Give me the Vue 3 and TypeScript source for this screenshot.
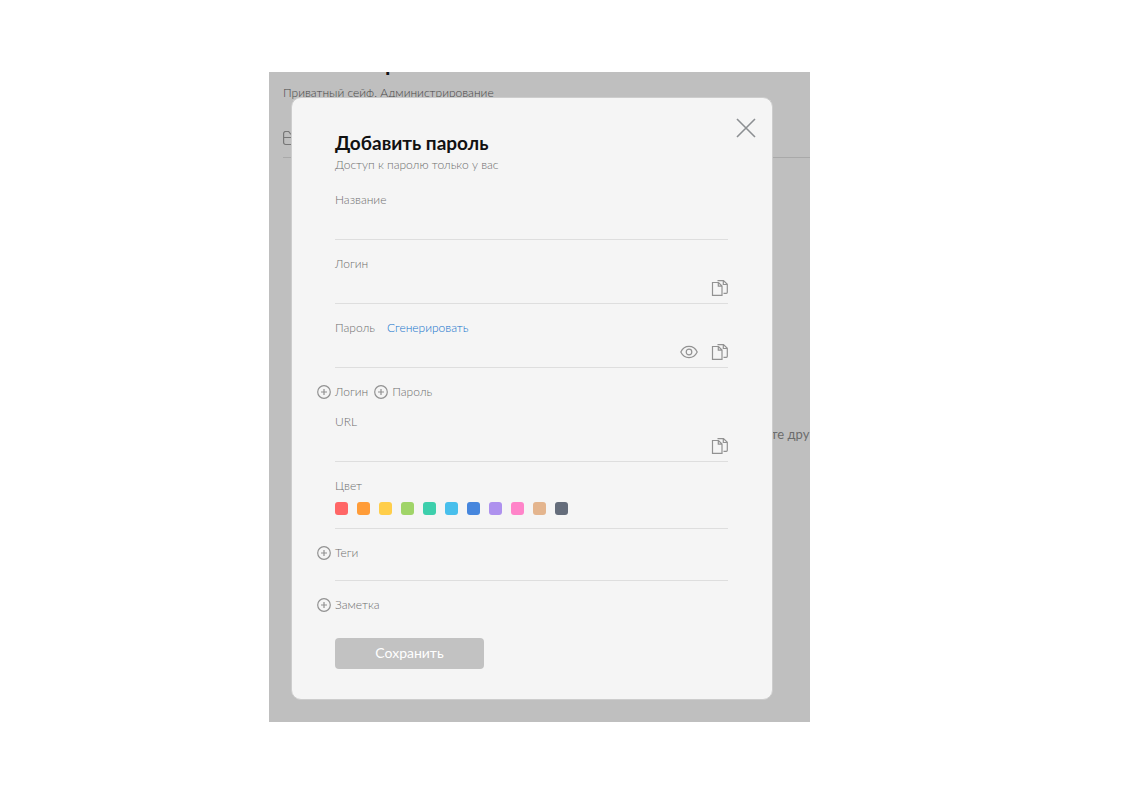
<script setup lang="ts">
import { reactive, ref } from 'vue'

interface Field {
  id: 'title' | 'login' | 'password' | 'url'
  label: string
  type: string
  copy: boolean
}

const credentials: Field[] = [
  { id: 'title', label: 'Название', type: 'text', copy: false },
  { id: 'login', label: 'Логин', type: 'text', copy: true },
  { id: 'password', label: 'Пароль', type: 'password', copy: true },
  { id: 'url', label: 'URL', type: 'url', copy: true },
]

const colors: string[] = [
  '#ff6666', '#ff9c38', '#ffce4a', '#a0d468', '#3dcfac', '#48bfec',
  '#4686dd', '#ae91ee', '#ff84c9', '#e4b58e', '#656d7b',
]

const values = reactive({ title: '', login: '', password: '', url: '' })
const color = ref('')
const visible = ref(false)

function generate(): void {
  values.password = Math.random().toString(36).slice(2, 14)
}

function copy(id: Field['id']): void {
  navigator.clipboard?.writeText(values[id])
}
</script>

<template>
  <div class="page">
    <main class="stage">
      <div class="behind">
        <div class="heading">р</div>
        <div class="access">Приватный сейф. Администрирование</div>
        <div class="toolbar">
          <svg class="folder" width="18" height="16" viewBox="0 0 18 16">
            <path d="M.6 11.500v-9a2 2 0 0 1 2-2h3l2 2.500h7a2 2 0 0 1 2 2v6.500a2 2 0 0 1-2 2h-12a2 2 0 0 1-2-2zM.6 6.500h16" />
          </svg>
        </div>
        <div class="hint">те дру</div>
      </div>

      <form class="modal" @submit.prevent>
        <button class="close" type="button" aria-label="Закрыть">
          <svg width="20" height="20" viewBox="0 0 20 20"><path d="M1 1l18 18M19 1L1 19" /></svg>
        </button>
        <h1>Добавить пароль</h1>
        <p class="sub">Доступ к паролю только у вас</p>

        <template v-for="f in credentials" :key="f.id">
          <div v-if="f.id === 'url'" class="extras">
            <button v-for="name in ['Логин', 'Пароль']" :key="name" class="add" type="button">
              <svg width="14" height="14" viewBox="0 0 14 14"><circle cx="7" cy="7" r="6.300" /><path d="M7 4v6M4 7h6" /></svg>
              <span>{{ name }}</span>
            </button>
          </div>
          <div class="field">
            <div class="caption">
              <label :for="f.id">{{ f.label }}</label>
              <button v-if="f.id === 'password'" class="generate" type="button" @click="generate">Сгенерировать</button>
            </div>
            <div class="entry">
              <input :id="f.id" v-model="values[f.id]" :type="f.id === 'password' && visible ? 'text' : f.type" autocomplete="off">
              <button v-if="f.id === 'password'" class="icon" type="button" aria-label="Показать пароль" @click="visible = !visible">
                <svg width="18" height="14" viewBox="0 0 18 14">
                  <path d="M.8 7C2.500 3.500 5.400 1.400 9 1.400S15.500 3.500 17.200 7C15.500 10.500 12.600 12.600 9 12.600S2.500 10.500.8 7z" /><circle cx="9" cy="7" r="2.800" />
                </svg>
              </button>
              <button v-if="f.copy" class="icon" type="button" aria-label="Скопировать" @click="copy(f.id)">
                <svg width="17" height="16" viewBox="0 0 17 16">
                  <path d="M1.500 2.500H7.500L11 6V15.400H1.500zM7.300 2.700V6.200H10.800M6.500 .6H12.500L16.300 4.300V12.300a1 1 0 0 1-1 1H12.500M12.300 .8V4.500H16.100" />
                </svg>
              </button>
            </div>
          </div>
        </template>

        <fieldset class="colors">
          <legend>Цвет</legend>
          <div class="swatches">
            <input v-for="c in colors" :key="c" v-model="color" type="radio" name="color" :value="c" :aria-label="c" :style="{ backgroundColor: c }">
          </div>
        </fieldset>

        <div class="tags">
          <button class="add" type="button">
            <svg width="14" height="14" viewBox="0 0 14 14"><circle cx="7" cy="7" r="6.300" /><path d="M7 4v6M4 7h6" /></svg>
            <span>Теги</span>
          </button>
        </div>
        <div class="note">
          <button class="add" type="button">
            <svg width="14" height="14" viewBox="0 0 14 14"><circle cx="7" cy="7" r="6.300" /><path d="M7 4v6M4 7h6" /></svg>
            <span>Заметка</span>
          </button>
        </div>
        <button class="save" type="submit">Сохранить</button>
      </form>
    </main>
  </div>
</template>

<style>
body {
  background: #fff;
}
</style>

<style scoped>
* {
  box-sizing: border-box;
}

.page {
  padding: 72px 312px 71px 269px;
  font: 300 12px/16px Lato, "Noto Sans", sans-serif;
  color: #6e6e6e;
}

.stage {
  position: relative;
  overflow: hidden;
  padding: 25px 37px 22px 22px;
  background: #bfbfbf;
}

.behind {
  position: absolute;
  inset: 0;
  padding-left: 14px;
  color: #484848;
}

.heading {
  height: 32px;
  margin-top: -19px;
  padding-left: 102px;
  color: #111;
  font-size: 22px;
  font-weight: 700;
  line-height: 20px;
}

.access {
  white-space: nowrap;
}

.toolbar {
  height: 57px;
  padding-top: 30px;
  border-bottom: 1px solid #a9a9a9;
}

.hint {
  padding: 267px 0 0 488px;
  color: #6c6c6c;
  font-size: 13px;
  font-weight: 400;
  line-height: 18px;
  white-space: nowrap;
}

svg {
  display: block;
  flex: none;
  fill: none;
  stroke: #929292;
  stroke-width: 1.2;
}

.folder {
  stroke: #777;
}

.modal {
  position: relative;
  padding: 33px 44px 30px 43px;
  border: 1px solid #cdcdcd;
  border-radius: 10px;
  background: #f5f5f5;
}

button {
  margin: 0;
  padding: 0;
  border: 0;
  background: none;
  color: inherit;
  font: inherit;
  cursor: pointer;
}

.close {
  position: absolute;
  top: 20px;
  right: 16px;
}

.close svg {
  stroke: #8c8f92;
  stroke-width: 1.6;
}

h1 {
  margin: 0 0 2px;
  color: #111;
  font-size: 19px;
  font-weight: 700;
  line-height: 24px;
}

.sub {
  margin: 0 0 19px;
}

.field {
  margin-bottom: 16px;
  border-bottom: 1px solid #dedede;
}

.caption {
  display: flex;
  gap: 12px;
}

.generate {
  color: #1272cc;
}

.entry {
  display: flex;
  align-items: center;
  gap: 13px;
  height: 31px;
}

.entry input {
  flex: 1;
  min-width: 0;
  height: 30px;
  padding: 0;
  border: 0;
  outline: 0;
  background: none;
  color: #222;
  font: inherit;
}

.extras {
  display: flex;
  gap: 6px;
  margin-bottom: 14px;
}

.add {
  display: flex;
  align-items: center;
  gap: 4px;
}

.extras,
.tags .add,
.note .add {
  margin-left: -18px;
}

.colors {
  min-width: 0;
  margin: 0;
  padding: 0 0 13px;
  border: 0;
  border-bottom: 1px solid #dedede;
}

.colors legend {
  padding: 0;
}

.swatches {
  display: flex;
  gap: 9px;
  padding-top: 8px;
}

.swatches input {
  appearance: none;
  width: 13px;
  height: 13px;
  margin: 0;
  border-radius: 3px;
  cursor: pointer;
}

.tags {
  padding: 16px 0 19px;
  border-bottom: 1px solid #dedede;
}

.note {
  padding: 16px 0 25px;
}

.save {
  display: block;
  width: 149px;
  height: 31px;
  padding-bottom: 2px;
  border-radius: 4px;
  background: #c2c2c2;
  color: #fff;
  font-size: 14px;
  font-weight: 400;
}
</style>
